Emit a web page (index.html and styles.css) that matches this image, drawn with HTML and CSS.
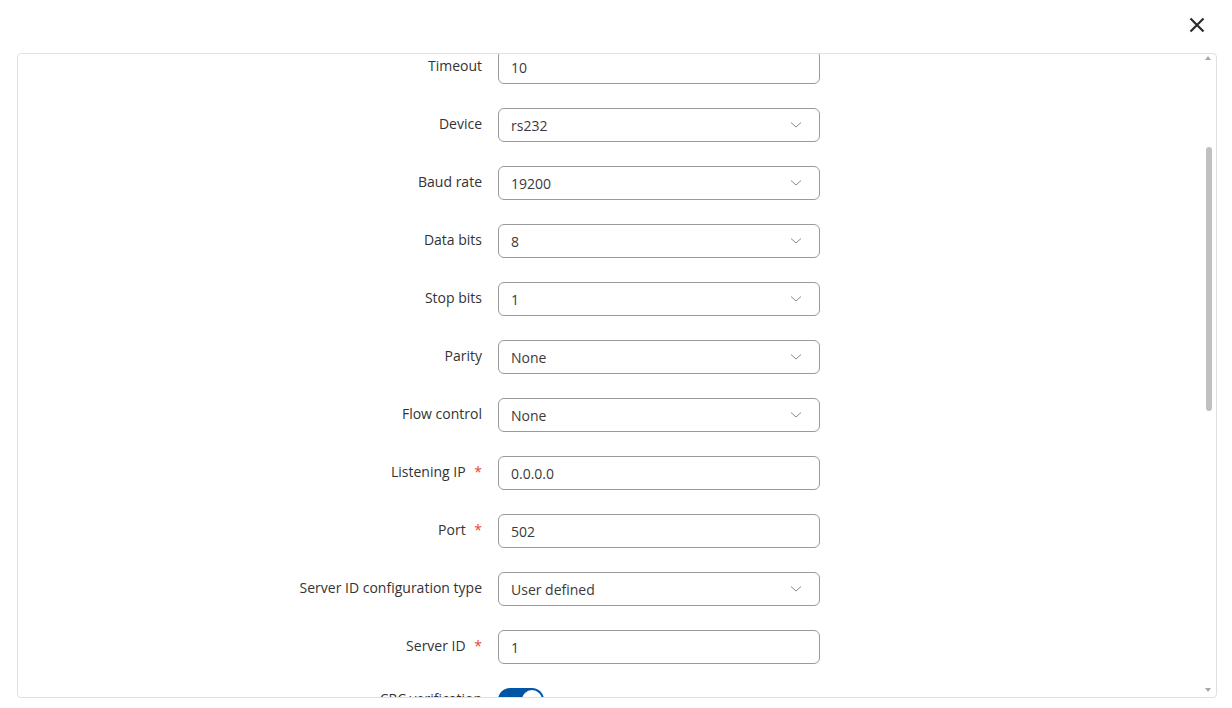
FILE: index.html
```html
<!DOCTYPE html>
<html>
<head>
<meta charset="utf-8">
<link rel="stylesheet" href="styles.css">
</head>
<body>
<div class="modal">
  <div class="modal-head">
    <button class="close" aria-label="Close">
      <svg width="16" height="16" viewBox="0 0 16 16"><path d="M1.5 1.5 L14.5 14.5 M14.5 1.5 L1.5 14.5" stroke="#2b2b2b" stroke-width="2.2" fill="none"/></svg>
    </button>
  </div>
  <div class="panel">
    <div class="scroller" id="scroller">
      <div class="form">
        <div class="row"><div class="label">Enabled</div><div class="field"><span class="toggle"><span class="knob"></span></span></div></div>
        <div class="row"><div class="label">Name <span class="req">*</span></div><div class="field"><div class="input">modbus</div></div></div>
        <div class="row"><div class="label">Mode</div><div class="field"><div class="input select">Gateway<svg class="chev" width="12" height="8" viewBox="0 0 12 8"><path d="M1 1.5 L6 6 L11 1.5" stroke="#8a8a8a" stroke-width="1" fill="none"/></svg></div></div></div>
        <div class="row"><div class="label">Timeout</div><div class="field"><div class="input">10</div></div></div>
        <div class="row"><div class="label">Device</div><div class="field"><div class="input select">rs232<svg class="chev" width="12" height="8" viewBox="0 0 12 8"><path d="M1 1.5 L6 6 L11 1.5" stroke="#8a8a8a" stroke-width="1" fill="none"/></svg></div></div></div>
        <div class="row"><div class="label">Baud rate</div><div class="field"><div class="input select">19200<svg class="chev" width="12" height="8" viewBox="0 0 12 8"><path d="M1 1.5 L6 6 L11 1.5" stroke="#8a8a8a" stroke-width="1" fill="none"/></svg></div></div></div>
        <div class="row"><div class="label">Data bits</div><div class="field"><div class="input select">8<svg class="chev" width="12" height="8" viewBox="0 0 12 8"><path d="M1 1.5 L6 6 L11 1.5" stroke="#8a8a8a" stroke-width="1" fill="none"/></svg></div></div></div>
        <div class="row"><div class="label">Stop bits</div><div class="field"><div class="input select">1<svg class="chev" width="12" height="8" viewBox="0 0 12 8"><path d="M1 1.5 L6 6 L11 1.5" stroke="#8a8a8a" stroke-width="1" fill="none"/></svg></div></div></div>
        <div class="row"><div class="label">Parity</div><div class="field"><div class="input select">None<svg class="chev" width="12" height="8" viewBox="0 0 12 8"><path d="M1 1.5 L6 6 L11 1.5" stroke="#8a8a8a" stroke-width="1" fill="none"/></svg></div></div></div>
        <div class="row"><div class="label">Flow control</div><div class="field"><div class="input select">None<svg class="chev" width="12" height="8" viewBox="0 0 12 8"><path d="M1 1.5 L6 6 L11 1.5" stroke="#8a8a8a" stroke-width="1" fill="none"/></svg></div></div></div>
        <div class="row"><div class="label">Listening IP <span class="req">*</span></div><div class="field"><div class="input">0.0.0.0</div></div></div>
        <div class="row"><div class="label">Port <span class="req">*</span></div><div class="field"><div class="input">502</div></div></div>
        <div class="row"><div class="label">Server ID configuration type</div><div class="field"><div class="input select">User defined<svg class="chev" width="12" height="8" viewBox="0 0 12 8"><path d="M1 1.5 L6 6 L11 1.5" stroke="#8a8a8a" stroke-width="1" fill="none"/></svg></div></div></div>
        <div class="row"><div class="label">Server ID <span class="req">*</span></div><div class="field"><div class="input">1</div></div></div>
        <div class="row row-toggle"><div class="label">CRC verification</div><div class="field"><span class="toggle"><span class="knob"></span></span></div></div>
        <div class="row row-toggle"><div class="label">Allow remote access</div><div class="field"><span class="toggle off"><span class="knob"></span></span></div></div>
        <div class="row"><div class="label">Max connections</div><div class="field"><div class="input">8</div></div></div>
        <div class="row row-toggle"><div class="label">Keep alive</div><div class="field"><span class="toggle off"><span class="knob"></span></span></div></div>
        <div class="row"><div class="label">Allowed IP</div><div class="field"><div class="input"></div></div></div>
        <div class="row row-toggle"><div class="label">Echo</div><div class="field"><span class="toggle off"><span class="knob"></span></span></div></div>
        <div class="row"><div class="label">Delay</div><div class="field"><div class="input">0</div></div></div>
        <div class="row"><div class="label">Retries</div><div class="field"><div class="input">3</div></div></div>
        <div class="row"><div class="label">Response timeout</div><div class="field"><div class="input">1000</div></div></div>
        <div class="row"><div class="label">Inactivity timeout</div><div class="field"><div class="input">300</div></div></div>
        <div class="row"><div class="label">Description</div><div class="field"><div class="input"></div></div></div>
      </div>
    </div>
    <div class="scrollbar">
      <span class="arrow up"></span>
      <span class="thumb"></span>
      <span class="arrow down"></span>
    </div>
  </div>
</div>
<script src="script.js"></script>
</body>
</html>
```
FILE: styles.css
```css
html, body {
  margin: 0;
  padding: 0;
  background: #ffffff;
}
body {
  font-family: "Open Sans", "Liberation Sans", sans-serif;
  font-size: 14px;
  color: #333333;
  width: 1232px;
  height: 708px;
  overflow: hidden;
}
.modal {
  display: flex;
  flex-direction: column;
  padding: 0 15px 0 17px;
}
.modal-head {
  height: 53px;
  display: flex;
  justify-content: flex-end;
  align-items: flex-start;
}
.close {
  margin-top: 17px;
  margin-right: 12px;
  padding: 0;
  border: 0;
  background: none;
  width: 16px;
  height: 16px;
  display: block;
  cursor: pointer;
}
.close svg { display: block; }
.panel {
  position: relative;
  height: 643px;
  border: 1px solid #e0e0e0;
  border-radius: 4px;
  background: #fff;
  overflow: hidden;
}
.scroller {
  height: 100%;
  overflow-y: scroll;
  scrollbar-width: none;
}
.scroller::-webkit-scrollbar { display: none; }
.scrollbar {
  position: absolute;
  top: 0;
  right: 0;
  bottom: 0;
  width: 15px;
}
.arrow {
  position: absolute;
  left: 4px;
  width: 0;
  height: 0;
  border-left: 3.5px solid transparent;
  border-right: 3.5px solid transparent;
}
.arrow.up {
  top: 2px;
  border-bottom: 4px solid #a8a8a8;
}
.arrow.down {
  bottom: 5px;
  border-top: 4px solid #a8a8a8;
}
.thumb {
  position: absolute;
  left: 5px;
  top: 93px;
  width: 6px;
  height: 264px;
  border-radius: 3px;
  background: #c1c1c1;
}
.form {
  display: flex;
  flex-direction: column;
  gap: 24px;
  padding: 33px 0 40px 0;
}
.row {
  display: grid;
  grid-template-columns: 464px 322px;
  column-gap: 16px;
  min-height: 34px;
}
.label {
  text-align: right;
  line-height: 20px;
  padding-top: 6px;
  color: #333;
  white-space: nowrap;
}
.row-toggle .label { padding-top: 1px; }
.req {
  color: #e5452f;
  margin-left: 5px;
}
.input {
  box-sizing: border-box;
  height: 34px;
  border: 1px solid #9a9a9a;
  border-radius: 6px;
  padding: 0 12px;
  display: flex;
  align-items: center;
  justify-content: space-between;
  color: #3a3a3a;
}
.chev {
  display: block;
  margin-right: 5px;
}
.toggle {
  display: inline-block;
  position: relative;
  width: 46px;
  height: 24px;
  border-radius: 12px;
  background: #0055a5;
}
.toggle .knob {
  position: absolute;
  top: 2px;
  right: 2px;
  width: 20px;
  height: 20px;
  border-radius: 50%;
  background: #fff;
}
.toggle.off { background: #bdbdbd; }
.toggle.off .knob { right: auto; left: 2px; }
```
FILE: script.js
```js
document.getElementById('scroller').scrollTop = 211;
```
